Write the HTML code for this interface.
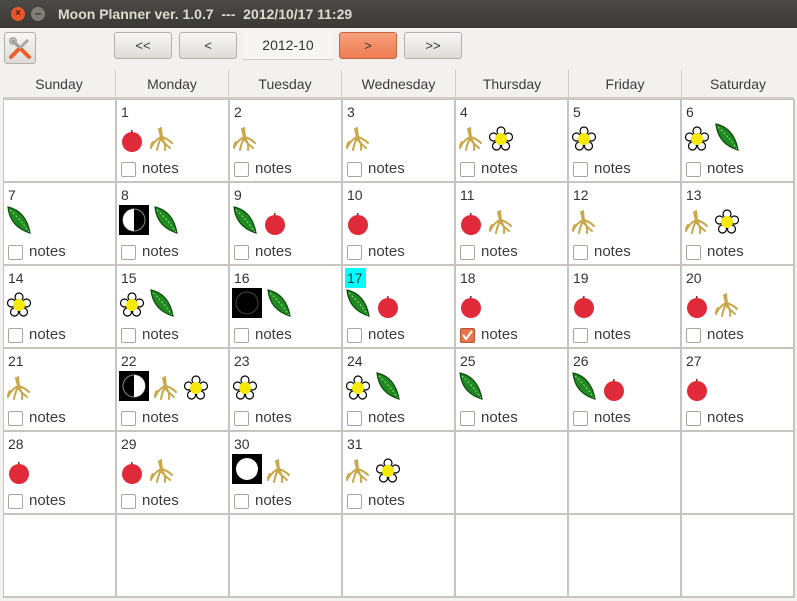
<!DOCTYPE html><html><head><style>
*{margin:0;padding:0;box-sizing:border-box}
body{width:797px;height:601px;background:#f2f1f0;font-family:"Liberation Sans","DejaVu Sans",sans-serif;position:relative;overflow:hidden}
#title{position:absolute;left:0;top:0;width:797px;height:28px;background:linear-gradient(#4b4a46,#3a3935);color:#dfdbd2;font-weight:bold;font-size:14px;line-height:28px;padding-left:58px;font-family:"Liberation Sans",sans-serif}
.wb{position:absolute;top:7px;width:14px;height:14px;border-radius:50%}
.btn{position:absolute;top:32px;height:27px;border:1px solid #b4b0aa;border-radius:3px;background:linear-gradient(#f8f7f6,#dedbd8);font-size:13px;color:#333;text-align:center;line-height:25px}
#hdr{position:absolute;left:3px;top:70px;width:791px;height:29px;border-bottom:2px solid #d0ccc7}
.h{position:absolute;top:0;height:29px;font-size:14px;color:#3c3c3c;text-align:center;line-height:29px;border-left:1px solid #d0ccc7}
#grid{position:absolute;left:3px;top:99px;width:792px;height:499px;background:#c8c4bf;display:grid;grid-template-columns:repeat(7,111px);grid-template-rows:repeat(6,81px);gap:2px;padding:1px}
.c{background:#fff;position:relative}
.n{position:absolute;left:4px;top:4px;font-size:14px;color:#333;line-height:16px;padding:0 2px 0 0}
.i{position:absolute;top:22px;left:2px;height:30px;display:flex;align-items:flex-end;gap:4px}
.i svg{display:block}
.cb{position:absolute;left:4px;top:62px;width:15px;height:15px;border:1px solid #a9a59f;border-radius:2px;background:#fff}
.cb.on{background:#e9744a;border-color:#b25530}
.t{position:absolute;left:25px;top:60px;font-size:15px;color:#3c3c3c}
</style></head><body>
<svg width="0" height="0" style="position:absolute">
<defs>
<symbol id="ap" viewBox="0 0 26 26"><path d="M13 4 L12 9" stroke="#6b2b2b" stroke-width="1.5"/><circle cx="13" cy="16" r="10" fill="#e02a3a"/></symbol>
<symbol id="rt" viewBox="0 0 26 26"><g stroke="#c8a84a" stroke-width="2" fill="none" stroke-linecap="round"><path d="M12 2 L13 12 M10 3 L12 11"/><path d="M12 11 Q6 14 3 20 M12 12 Q9 18 8 24 M13 12 Q17 18 16 24 M13 11 Q19 13 23 17 M12 13 Q14 16 21 22 M4 16 Q2 18 2 22"/></g></symbol>
<symbol id="fl" viewBox="0 0 26 26"><g fill="#fff" stroke="#000" stroke-width="1.2"><circle cx="13" cy="5" r="4"/><circle cx="5.5" cy="11" r="4"/><circle cx="20.5" cy="11" r="4"/><circle cx="8.5" cy="20" r="4"/><circle cx="17.5" cy="20" r="4"/></g><circle cx="13" cy="13" r="6" fill="#f5e90a"/></symbol>
<symbol id="lf" viewBox="0 0 26 30"><path d="M2 2 Q20 6 24 28 Q4 22 2 2Z" fill="#1f8a1f" stroke="#0a4a0a" stroke-width="1.2"/><path d="M4 5 Q14 14 23 27" stroke="#9ed39e" stroke-width="1" stroke-dasharray="2 2" fill="none"/></symbol>
</defs></svg>
<div id="title">Moon Planner ver. 1.0.7 &nbsp;--- &nbsp;2012/10/17 11:29</div>
<div class="wb" style="left:11px;background:#e9562a;color:#4a1a0a;font-size:10px;text-align:center;line-height:14px;font-weight:bold">×</div>
<div class="wb" style="left:31px;background:#807d78;color:#333;font-size:12px;text-align:center;line-height:12px;font-weight:bold">–</div>
<div class="btn" style="left:4px;width:32px;height:32px;padding-top:3px"><svg width="24" height="24" viewBox="0 0 24 24"><path d="M4 4 L20 20" stroke="#999" stroke-width="3"/><path d="M20 4 L4 20" stroke="#aaa" stroke-width="3"/><path d="M14 14 L21 21" stroke="#e8602a" stroke-width="4" stroke-linecap="round"/><path d="M10 14 L3 21" stroke="#e8602a" stroke-width="4" stroke-linecap="round"/><circle cx="5" cy="5" r="3" fill="none" stroke="#aaa" stroke-width="2"/></svg></div>
<div class="btn" style="left:114px;width:58px">&lt;&lt;</div>
<div class="btn" style="left:179px;width:58px">&lt;</div>
<div style="position:absolute;left:243px;top:31px;width:90px;height:29px;background:#f6f5f4;border-bottom:1px solid #ccc;text-align:center;line-height:29px;font-size:14px;color:#333">2012-10</div>
<div class="btn" style="left:339px;width:58px;background:linear-gradient(#f6a07c,#ee7c52);border-color:#c9653f">&gt;</div>
<div class="btn" style="left:404px;width:58px">&gt;&gt;</div>
<div id="hdr">
<div class="h" style="left:0;width:112px;border-left:none">Sunday</div>
<div class="h" style="left:112px;width:113px">Monday</div>
<div class="h" style="left:225px;width:113px">Tuesday</div>
<div class="h" style="left:338px;width:114px">Wednesday</div>
<div class="h" style="left:452px;width:113px">Thursday</div>
<div class="h" style="left:565px;width:113px">Friday</div>
<div class="h" style="left:678px;width:113px">Saturday</div>
</div>
<div id="grid">
<div class="c"></div>
<div class="c"><div class="n">1</div><div class="i"><svg width="26" height="26"><use href="#ap"/></svg><svg width="26" height="26"><use href="#rt"/></svg></div><div class="cb"></div><div class="t">notes</div></div>
<div class="c"><div class="n">2</div><div class="i"><svg width="26" height="26"><use href="#rt"/></svg></div><div class="cb"></div><div class="t">notes</div></div>
<div class="c"><div class="n">3</div><div class="i"><svg width="26" height="26"><use href="#rt"/></svg></div><div class="cb"></div><div class="t">notes</div></div>
<div class="c"><div class="n">4</div><div class="i"><svg width="26" height="26"><use href="#rt"/></svg><svg width="26" height="26"><use href="#fl"/></svg></div><div class="cb"></div><div class="t">notes</div></div>
<div class="c"><div class="n">5</div><div class="i"><svg width="26" height="26"><use href="#fl"/></svg></div><div class="cb"></div><div class="t">notes</div></div>
<div class="c"><div class="n">6</div><div class="i"><svg width="26" height="26"><use href="#fl"/></svg><svg width="26" height="30"><use href="#lf"/></svg></div><div class="cb"></div><div class="t">notes</div></div>

<div class="c"><div class="n">7</div><div class="i"><svg width="26" height="30"><use href="#lf"/></svg></div><div class="cb"></div><div class="t">notes</div></div>
<div class="c"><div class="n">8</div><div class="i"><svg width="30" height="30"><rect width="30" height="30" fill="#000"/><circle cx="15" cy="15" r="11" fill="#000" stroke="#888" stroke-width="1"/><path d="M15 4 A11 11 0 0 0 15 26Z" fill="#fff"/></svg><svg width="26" height="30"><use href="#lf"/></svg></div><div class="cb"></div><div class="t">notes</div></div>
<div class="c"><div class="n">9</div><div class="i"><svg width="26" height="30"><use href="#lf"/></svg><svg width="26" height="26"><use href="#ap"/></svg></div><div class="cb"></div><div class="t">notes</div></div>
<div class="c"><div class="n">10</div><div class="i"><svg width="26" height="26"><use href="#ap"/></svg></div><div class="cb"></div><div class="t">notes</div></div>
<div class="c"><div class="n">11</div><div class="i"><svg width="26" height="26"><use href="#ap"/></svg><svg width="26" height="26"><use href="#rt"/></svg></div><div class="cb"></div><div class="t">notes</div></div>
<div class="c"><div class="n">12</div><div class="i"><svg width="26" height="26"><use href="#rt"/></svg></div><div class="cb"></div><div class="t">notes</div></div>
<div class="c"><div class="n">13</div><div class="i"><svg width="26" height="26"><use href="#rt"/></svg><svg width="26" height="26"><use href="#fl"/></svg></div><div class="cb"></div><div class="t">notes</div></div>

<div class="c"><div class="n">14</div><div class="i"><svg width="26" height="26"><use href="#fl"/></svg></div><div class="cb"></div><div class="t">notes</div></div>
<div class="c"><div class="n">15</div><div class="i"><svg width="26" height="26"><use href="#fl"/></svg><svg width="26" height="30"><use href="#lf"/></svg></div><div class="cb"></div><div class="t">notes</div></div>
<div class="c"><div class="n">16</div><div class="i"><svg width="30" height="30"><rect width="30" height="30" fill="#000"/><circle cx="15" cy="15" r="11" fill="#000" stroke="#444" stroke-width="1"/></svg><svg width="26" height="30"><use href="#lf"/></svg></div><div class="cb"></div><div class="t">notes</div></div>
<div class="c"><div class="n" style="background:#00ffff;left:2px;top:2px;padding:2px 3px 2px 2px">17</div><div class="i"><svg width="26" height="30"><use href="#lf"/></svg><svg width="26" height="26"><use href="#ap"/></svg></div><div class="cb"></div><div class="t">notes</div></div>
<div class="c"><div class="n">18</div><div class="i"><svg width="26" height="26"><use href="#ap"/></svg></div><div class="cb on"><svg width="13" height="13" viewBox="0 0 13 13"><path d="M2 6 L5 10 L11 2" stroke="#fff" stroke-width="2" fill="none"/></svg></div><div class="t">notes</div></div>
<div class="c"><div class="n">19</div><div class="i"><svg width="26" height="26"><use href="#ap"/></svg></div><div class="cb"></div><div class="t">notes</div></div>
<div class="c"><div class="n">20</div><div class="i"><svg width="26" height="26"><use href="#ap"/></svg><svg width="26" height="26"><use href="#rt"/></svg></div><div class="cb"></div><div class="t">notes</div></div>

<div class="c"><div class="n">21</div><div class="i"><svg width="26" height="26"><use href="#rt"/></svg></div><div class="cb"></div><div class="t">notes</div></div>
<div class="c"><div class="n">22</div><div class="i"><svg width="30" height="30"><rect width="30" height="30" fill="#000"/><circle cx="15" cy="15" r="11" fill="#000" stroke="#888" stroke-width="1"/><path d="M15 4 A11 11 0 0 1 15 26Z" fill="#fff"/></svg><svg width="26" height="26"><use href="#rt"/></svg><svg width="26" height="26"><use href="#fl"/></svg></div><div class="cb"></div><div class="t">notes</div></div>
<div class="c"><div class="n">23</div><div class="i"><svg width="26" height="26"><use href="#fl"/></svg></div><div class="cb"></div><div class="t">notes</div></div>
<div class="c"><div class="n">24</div><div class="i"><svg width="26" height="26"><use href="#fl"/></svg><svg width="26" height="30"><use href="#lf"/></svg></div><div class="cb"></div><div class="t">notes</div></div>
<div class="c"><div class="n">25</div><div class="i"><svg width="26" height="30"><use href="#lf"/></svg></div><div class="cb"></div><div class="t">notes</div></div>
<div class="c"><div class="n">26</div><div class="i"><svg width="26" height="30"><use href="#lf"/></svg><svg width="26" height="26"><use href="#ap"/></svg></div><div class="cb"></div><div class="t">notes</div></div>
<div class="c"><div class="n">27</div><div class="i"><svg width="26" height="26"><use href="#ap"/></svg></div><div class="cb"></div><div class="t">notes</div></div>

<div class="c"><div class="n">28</div><div class="i"><svg width="26" height="26"><use href="#ap"/></svg></div><div class="cb"></div><div class="t">notes</div></div>
<div class="c"><div class="n">29</div><div class="i"><svg width="26" height="26"><use href="#ap"/></svg><svg width="26" height="26"><use href="#rt"/></svg></div><div class="cb"></div><div class="t">notes</div></div>
<div class="c"><div class="n">30</div><div class="i"><svg width="30" height="30"><rect width="30" height="30" fill="#000"/><circle cx="15" cy="15" r="11" fill="#fff"/></svg><svg width="26" height="26"><use href="#rt"/></svg></div><div class="cb"></div><div class="t">notes</div></div>
<div class="c"><div class="n">31</div><div class="i"><svg width="26" height="26"><use href="#rt"/></svg><svg width="26" height="26"><use href="#fl"/></svg></div><div class="cb"></div><div class="t">notes</div></div>
<div class="c"></div><div class="c"></div><div class="c"></div>

<div class="c"></div><div class="c"></div><div class="c"></div><div class="c"></div><div class="c"></div><div class="c"></div><div class="c"></div>
</div>
</body></html>
